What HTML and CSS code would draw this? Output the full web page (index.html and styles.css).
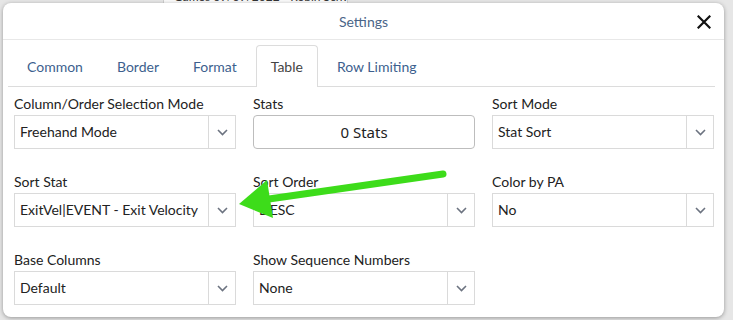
FILE: index.html
```html
<!DOCTYPE html>
<html lang="en">
<head>
    <meta charset="UTF-8">
    <meta name="viewport" content="width=device-width, initial-scale=1.0">
    <title>Settings</title>
    <link rel="stylesheet" href="styles.css">
</head>
<body>
    <div class="page-behind">
        <div class="behind-panel">Games 09/09/2022 - Robin Schwarts</div>
    </div>

    <div class="modal">
        <div class="modal-header">
            <span class="modal-title">Settings</span>
            <button class="close-btn" aria-label="Close">
                <svg width="14" height="14" viewBox="0 0 14 14">
                    <path d="M1.5 1.5 L12.5 12.5 M12.5 1.5 L1.5 12.5" stroke="#111" stroke-width="2.2" stroke-linecap="square"/>
                </svg>
            </button>
        </div>

        <div class="tabs">
            <span class="tab">Common</span>
            <span class="tab">Border</span>
            <span class="tab">Format</span>
            <span class="tab active">Table</span>
            <span class="tab">Row Limiting</span>
        </div>

        <div class="form-grid">
            <div class="field">
                <label>Column/Order Selection Mode</label>
                <div class="select"><span class="value">Freehand Mode</span><span class="caret"></span></div>
            </div>
            <div class="field">
                <label>Stats</label>
                <button class="stats-btn">0 Stats</button>
            </div>
            <div class="field">
                <label>Sort Mode</label>
                <div class="select"><span class="value">Stat Sort</span><span class="caret"></span></div>
            </div>

            <div class="field">
                <label>Sort Stat</label>
                <div class="select"><span class="value">ExitVel|EVENT - Exit Velocity</span><span class="caret"></span></div>
            </div>
            <div class="field">
                <label>Sort Order</label>
                <div class="select"><span class="value">DESC</span><span class="caret"></span></div>
            </div>
            <div class="field">
                <label>Color by PA</label>
                <div class="select"><span class="value">No</span><span class="caret"></span></div>
            </div>

            <div class="field">
                <label>Base Columns</label>
                <div class="select"><span class="value">Default</span><span class="caret"></span></div>
            </div>
            <div class="field">
                <label>Show Sequence Numbers</label>
                <div class="select"><span class="value">None</span><span class="caret"></span></div>
            </div>
        </div>
    </div>

    <!-- annotation arrow drawn over the screenshot -->
    <svg class="annotation" width="733" height="320" viewBox="0 0 733 320">
        <line x1="443" y1="174" x2="262" y2="200" stroke="#3ddc1a" stroke-width="7" stroke-linecap="round"/>
        <polygon points="239,204 267,180 273,218" fill="#3ddc1a"/>
    </svg>
</body>
</html>
```

FILE: styles.css
```css
* {
    box-sizing: border-box;
}
body {
    margin: 0;
    width: 733px;
    height: 320px;
    overflow: hidden;
    position: relative;
    background-color: #e6e6e6;
    font-family: Lato, "Liberation Sans", sans-serif;
    font-size: 14px;
    color: #222;
}
.page-behind {
    padding-left: 163px;
}
.behind-panel {
    width: 185px;
    height: 40px;
    margin-top: -9px;
    background-color: #fafafa;
    border-left: 1px solid #cfcfcf;
    border-right: 1px solid #cfcfcf;
    padding-left: 10px;
    font-size: 12px;
    line-height: 12px;
    color: #333;
    white-space: nowrap;
    overflow: hidden;
}
.modal {
    position: absolute;
    left: 3px;
    top: 3px;
    width: 721px;
    height: 314px;
    background-color: #fff;
    border-radius: 8px;
    box-shadow: 0 1px 4px rgba(0, 0, 0, 0.35);
}
.modal-header {
    height: 37px;
    border-bottom: 1px solid #e8e8e8;
    display: flex;
    align-items: center;
    justify-content: center;
    position: relative;
}
.modal-title {
    color: #4a6588;
    font-size: 14px;
}
.close-btn {
    position: absolute;
    right: 13px;
    top: 12px;
    border: none;
    background: none;
    padding: 0;
    width: 14px;
    height: 14px;
    display: flex;
}
.tabs {
    display: flex;
    gap: 4px;
    margin: 5px 9px 0 5px;
    padding-left: 4px;
    border-bottom: 1px solid #dcdcdc;
}
.tab {
    height: 41px;
    padding: 0 14px;
    display: flex;
    align-items: center;
    color: #3d5f8e;
    font-size: 14px;
    border: 1px solid transparent;
    border-bottom: none;
    margin-bottom: -1px;
}
.tab.active {
    color: #444;
    background-color: #fff;
    border-color: #dcdcdc;
    border-radius: 4px 4px 0 0;
    height: 42px;
}
.form-grid {
    display: grid;
    grid-template-columns: 222px 222px 222px;
    column-gap: 17px;
    row-gap: 24px;
    padding: 8px 0 0 11px;
}
.field label {
    display: block;
    height: 18px;
    line-height: 18px;
    margin-bottom: 2px;
    color: #222;
}
.select {
    display: flex;
    height: 34px;
    border: 1px solid #dadada;
    background-color: #fff;
}
.select .value {
    flex: 1;
    padding-left: 5px;
    line-height: 32px;
    white-space: nowrap;
    overflow: hidden;
}
.select .caret {
    width: 27px;
    border-left: 1px solid #dadada;
    background: url("data:image/svg+xml;utf8,<svg xmlns='http://www.w3.org/2000/svg' width='11' height='7' viewBox='0 0 11 7'><path d='M1 1 L5.5 5.5 L10 1' fill='none' stroke='%236c7380' stroke-width='1.6'/></svg>") no-repeat center;
}
.stats-btn {
    display: block;
    width: 100%;
    height: 34px;
    border: 1px solid #bdbdbd;
    border-radius: 4px;
    background-color: #fff;
    font-family: "Noto Sans", "Open Sans", sans-serif;
    font-size: 15px;
    font-weight: 400;
    color: #222;
}
.annotation {
    position: absolute;
    left: 0;
    top: 0;
    pointer-events: none;
}
```
